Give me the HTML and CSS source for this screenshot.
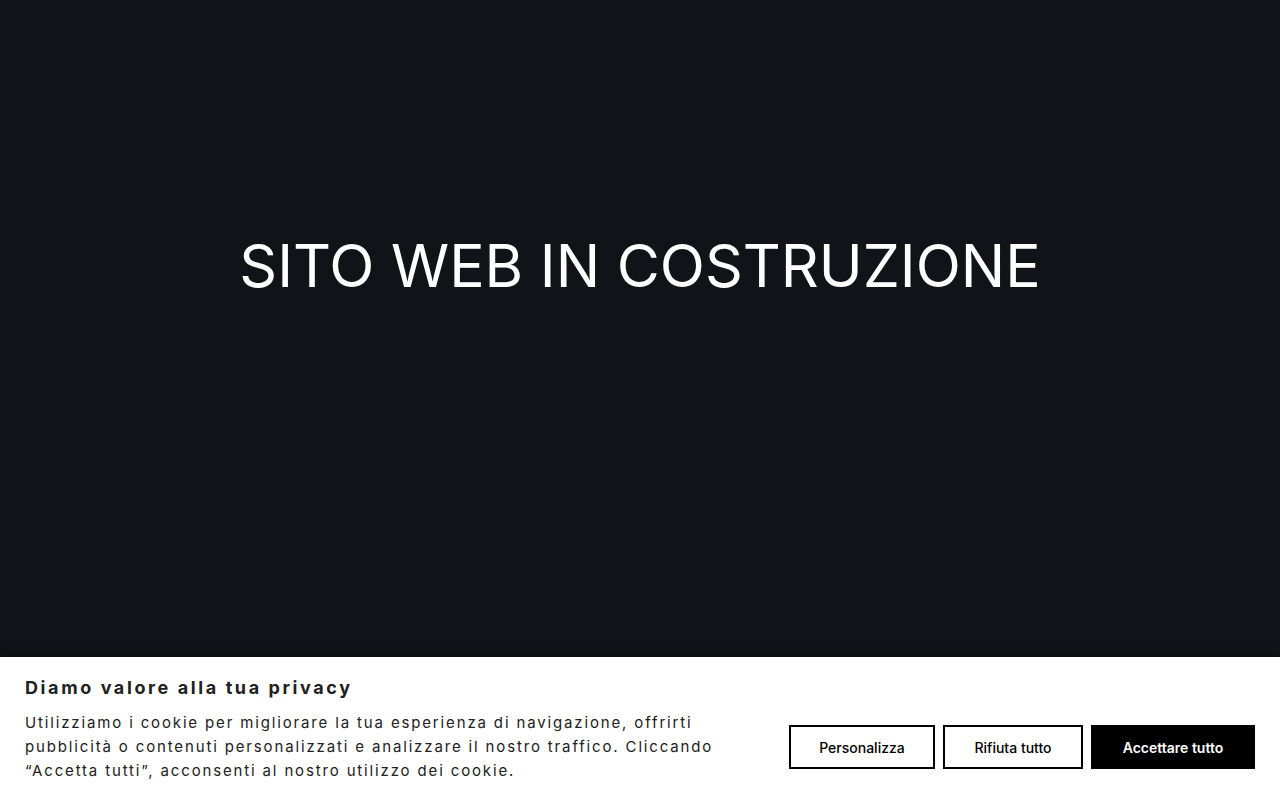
FILE: index.html
```html
<!DOCTYPE html>
<html lang="it">
<head>
<meta charset="utf-8">
<title>Sito web in costruzione</title>
<link rel="stylesheet" href="styles.css">
</head>
<body>
<main class="hero">
  <h1 class="hero-title">SITO WEB IN COSTRUZIONE</h1>
</main>
<section class="cookie-banner">
  <h2 class="cookie-title">Diamo valore alla tua privacy</h2>
  <div class="cookie-row">
    <p class="cookie-text">Utilizziamo i cookie per migliorare la tua esperienza di navigazione, offrirti pubblicità o contenuti personalizzati e analizzare il nostro traffico. Cliccando “Accetta tutti”, acconsenti al nostro utilizzo dei cookie.</p>
    <div class="cookie-actions">
      <button class="btn btn-outline btn-custom">Personalizza</button>
      <button class="btn btn-outline btn-reject">Rifiuta tutto</button>
      <button class="btn btn-solid btn-accept">Accettare tutto</button>
    </div>
  </div>
</section>
</body>
</html>
```
FILE: styles.css
```css
html, body {
  margin: 0;
  padding: 0;
  height: 100%;
}
body {
  background: #121318;
  font-family: Inter, "Open Sans", sans-serif;
  overflow: hidden;
  display: flex;
  flex-direction: column;
  height: 800px;
}
.hero {
  flex: 1;
  display: flex;
  justify-content: center;
  padding-top: 234px;
}
.hero-title {
  margin: 0;
  color: #ffffff;
  font-family: Inter, sans-serif;
  font-weight: 400;
  font-size: 59px;
  line-height: 64px;
  letter-spacing: 0;
  height: 64px;
}
.cookie-banner {
  background: #ffffff;
  box-shadow: 0 -2px 8px rgba(0,0,0,0.35);
  padding: 19px 25px 14px 25px;
  height: 143px;
  box-sizing: border-box;
}
.cookie-title {
  margin: 0 0 11px 0;
  font-size: 18px;
  line-height: 24px;
  font-weight: 700;
  color: #212121;
  letter-spacing: 2.6px;
}
.cookie-row {
  display: flex;
  align-items: center;
  justify-content: space-between;
}
.cookie-text {
  margin: 0;
  width: 720px;
  font-size: 15px;
  line-height: 24px;
  color: #212121;
  letter-spacing: 1.85px;
}
.cookie-actions {
  display: flex;
  gap: 8px;
}
.btn {
  height: 44px;
  font-family: Inter, sans-serif;
  font-size: 14px;
  font-weight: 500;
  padding: 0;
  cursor: pointer;
  box-sizing: border-box;
}
.btn-outline {
  background: #ffffff;
  color: #000000;
  border: 2px solid #000000;
}
.btn-solid {
  background: #000000;
  color: #ffffff;
  border: 2px solid #000000;
  font-weight: 600;
}
.btn-custom { width: 146px; }
.btn-reject { width: 140px; }
.btn-accept { width: 164px; }
```
